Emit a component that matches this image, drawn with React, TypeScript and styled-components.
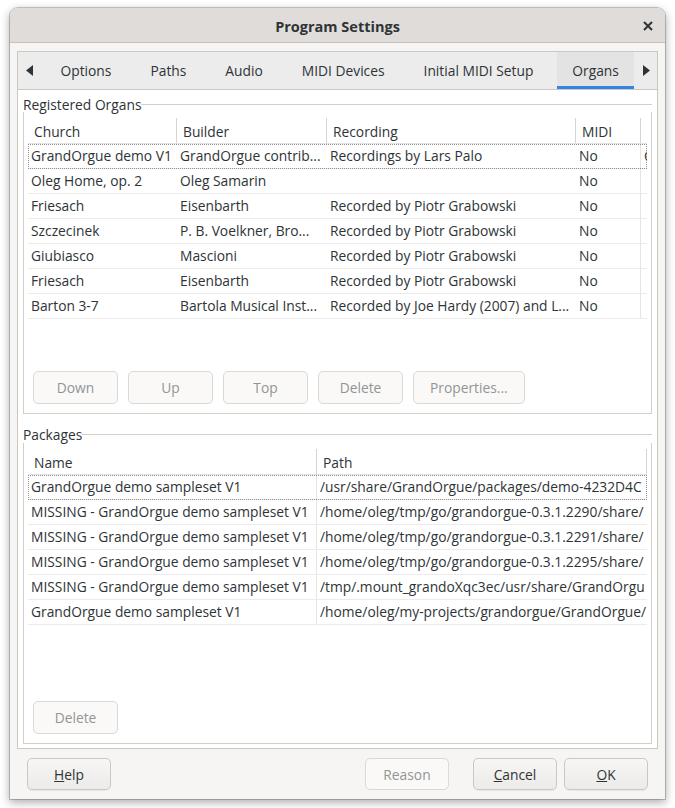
import React from 'react';
import styled, { createGlobalStyle } from 'styled-components';

const GlobalStyle = createGlobalStyle`
  html, body {
    margin: 0;
    background: #ffffff;
  }
  body {
    font-family: "Open Sans", "Noto Sans", sans-serif;
    font-size: 13.8px;
    color: #2e3436;
  }
`;

const Stage = styled.div`
  padding: 8px 10px 9px 10px;
`;

const Window = styled.div`
  width: 655px;
  height: 791px;
  display: flex;
  flex-direction: column;
  background: #f6f5f4;
  border-radius: 8px 8px 0 0;
  overflow: hidden;
  box-shadow: 0 0 0 1px rgba(0, 0, 0, 0.2), 0 3px 9px 1px rgba(0, 0, 0, 0.3);
`;

const TitleBar = styled.div`
  flex: none;
  height: 35px;
  box-sizing: border-box;
  padding-top: 2px;
  display: grid;
  grid-template-columns: 1fr auto 1fr;
  align-items: center;
  background: #dfdcd9;
  border-bottom: 1px solid #c6c2be;
`;

const Title = styled.div`
  grid-column: 2;
  font-weight: bold;
  font-size: 14.5px;
`;

const CloseButton = styled.div`
  grid-column: 3;
  justify-self: end;
  margin-right: 12px;
  display: flex;
`;

const Body = styled.div`
  flex: 1;
  display: flex;
  flex-direction: column;
  padding: 8px 7px 0 7px;
`;

const Notebook = styled.div`
  height: 698px;
  box-sizing: border-box;
  display: flex;
  flex-direction: column;
  border: 1px solid #cdc7c2;
`;

const TabStrip = styled.div`
  flex: none;
  height: 37px;
  display: flex;
  align-items: stretch;
  background: #ececec;
  border-bottom: 1px solid #cdc7c2;
`;

const TabArrow = styled.div<{ $end?: boolean }>`
  width: 23px;
  flex: ${p => (p.$end ? '1' : 'none')};
  display: flex;
  align-items: center;
  justify-content: ${p => (p.$end ? 'flex-start' : 'center')};
  padding-left: ${p => (p.$end ? '5px' : '0')};
`;

const Tab = styled.div<{ $active?: boolean }>`
  margin: 0 4px;
  padding: 0 15.5px 1px 15.5px;
  display: flex;
  align-items: center;
  white-space: nowrap;
  background: ${p => (p.$active ? '#e3e3e3' : 'transparent')};
  box-shadow: ${p => (p.$active ? 'inset 0 -3px 0 #3584e4' : 'none')};
`;

const Page = styled.div`
  flex: 1;
  min-height: 0;
  display: flex;
  flex-direction: column;
  gap: 13px;
  padding: 6px 5px 4px 5px;
  background: #ffffff;
`;

const Group = styled.div`
  flex: 1;
  min-height: 0;
  display: flex;
  flex-direction: column;
`;

const GroupHead = styled.div`
  flex: none;
  height: 16px;
  display: flex;
  align-items: center;
`;

const GroupLabel = styled.span`
  line-height: 16px;
  padding-top: 1px;
  white-space: nowrap;
`;

const GroupRule = styled.div`
  flex: 1;
  height: 1px;
  background: #d3cfcb;
`;

const GroupBox = styled.div`
  flex: 1;
  min-height: 0;
  display: flex;
  flex-direction: column;
  gap: 5px;
  padding: 6px 4px 9px 4px;
  border: 1px solid #d3cfcb;
  border-top: none;
`;

const List = styled.div`
  flex: 1;
  min-height: 0;
  overflow: hidden;
  background: #ffffff;
`;

const HeaderRow = styled.div<{ $cols: string }>`
  display: grid;
  grid-template-columns: ${p => p.$cols};
  height: 26px;
  box-sizing: border-box;
  border-bottom: 1px solid #e2e2e2;
`;

const HeaderCell = styled.div`
  padding: 1px 6px 0 6px;
  line-height: 25px;
  white-space: nowrap;
  overflow: hidden;
  border-right: 1px solid #d8d4d0;
`;

const Row = styled.div<{ $cols: string; $focus?: boolean }>`
  display: grid;
  grid-template-columns: ${p => p.$cols};
  height: 25px;
  box-sizing: border-box;
  border-bottom: 1px solid #ebebeb;
  outline: ${p => (p.$focus ? '1px dotted #8f8f8f' : 'none')};
  outline-offset: -1px;
`;

const Cell = styled.div<{ $rule?: boolean }>`
  padding: 0 3px;
  line-height: 24px;
  white-space: nowrap;
  overflow: hidden;
  border-right: ${p => (p.$rule ? '1px solid #e4e4e4' : 'none')};
`;

const ButtonRow = styled.div`
  flex: none;
  display: flex;
  gap: 10px;
  padding-left: 5px;
`;

const Button = styled.button<{ $short?: boolean }>`
  height: ${p => (p.$short ? '32px' : '33px')};
  min-width: ${p => (p.$short ? '84px' : '85px')};
  box-sizing: border-box;
  padding: 0 16px;
  font: inherit;
  color: #2e3436;
  border: 1px solid #cdc7c2;
  border-radius: 5px;
  background: linear-gradient(#f7f6f5, #edebe9);
  box-shadow: 0 1px 0 rgba(0, 0, 0, 0.05);
  &:disabled {
    color: #929595;
    background: #faf9f8;
    border-color: #dcd8d4;
    box-shadow: none;
  }
`;

const Footer = styled.div`
  flex: none;
  display: flex;
  align-items: center;
  padding: 9px 10px 0 10px;
`;

const FooterEnd = styled.div`
  margin-left: auto;
  display: flex;
  gap: 24px;
`;

const FooterPair = styled.div`
  display: flex;
  gap: 7px;
`;

const U = styled.span`
  text-decoration: underline;
`;

const Arrow: React.FC<{ right?: boolean }> = ({ right }) => (
  <svg width="7" height="11" viewBox="0 0 7 11">
    <polygon points={right ? '0,0 7,5.5 0,11' : '7,0 0,5.5 7,11'} fill="#2e3436" />
  </svg>
);

const organCols = '149px 150px 249px 65px 1fr';
const packageCols = '289px 1fr';

const organs = [
  ['GrandOrgue demo V1', 'GrandOrgue contrib...', 'Recordings by Lars Palo', 'No', 'C'],
  ['Oleg Home, op. 2', 'Oleg Samarin', '', 'No', ''],
  ['Friesach', 'Eisenbarth', 'Recorded by Piotr Grabowski', 'No', ''],
  ['Szczecinek', 'P. B. Voelkner, Bro...', 'Recorded by Piotr Grabowski', 'No', ''],
  ['Giubiasco', 'Mascioni', 'Recorded by Piotr Grabowski', 'No', ''],
  ['Friesach', 'Eisenbarth', 'Recorded by Piotr Grabowski', 'No', ''],
  ['Barton 3-7', 'Bartola Musical Inst...', 'Recorded by Joe Hardy (2007) and L...', 'No', ''],
];

const packages = [
  ['GrandOrgue demo sampleset V1', '/usr/share/GrandOrgue/packages/demo-4232D4C'],
  ['MISSING - GrandOrgue demo sampleset V1', '/home/oleg/tmp/go/grandorgue-0.3.1.2290/share/'],
  ['MISSING - GrandOrgue demo sampleset V1', '/home/oleg/tmp/go/grandorgue-0.3.1.2291/share/'],
  ['MISSING - GrandOrgue demo sampleset V1', '/home/oleg/tmp/go/grandorgue-0.3.1.2295/share/'],
  ['MISSING - GrandOrgue demo sampleset V1', '/tmp/.mount_grandoXqc3ec/usr/share/GrandOrgu'],
  ['GrandOrgue demo sampleset V1', '/home/oleg/my-projects/grandorgue/GrandOrgue/'],
];

const tabs = ['Options', 'Paths', 'Audio', 'MIDI Devices', 'Initial MIDI Setup', 'Organs'];

const App: React.FC = () => (
  <>
    <GlobalStyle />
    <Stage>
      <Window>
        <TitleBar>
          <Title>Program Settings</Title>
          <CloseButton>
            <svg width="10" height="10" viewBox="0 0 10 10">
              <path d="M1 1 L9 9 M9 1 L1 9" stroke="#2e3436" strokeWidth="2" />
            </svg>
          </CloseButton>
        </TitleBar>
        <Body>
          <Notebook>
            <TabStrip>
              <TabArrow><Arrow /></TabArrow>
              {tabs.map(t => (
                <Tab key={t} $active={t === 'Organs'}>{t}</Tab>
              ))}
              <TabArrow $end><Arrow right /></TabArrow>
            </TabStrip>
            <Page>
              <Group>
                <GroupHead>
                  <GroupLabel>Registered Organs</GroupLabel>
                  <GroupRule />
                </GroupHead>
                <GroupBox>
                  <List>
                    <HeaderRow $cols={organCols}>
                      <HeaderCell>Church</HeaderCell>
                      <HeaderCell>Builder</HeaderCell>
                      <HeaderCell>Recording</HeaderCell>
                      <HeaderCell>MIDI</HeaderCell>
                      <HeaderCell />
                    </HeaderRow>
                    {organs.map((r, i) => (
                      <Row key={i} $cols={organCols} $focus={i === 0}>
                        <Cell>{r[0]}</Cell>
                        <Cell>{r[1]}</Cell>
                        <Cell>{r[2]}</Cell>
                        <Cell $rule>{r[3]}</Cell>
                        <Cell>{r[4]}</Cell>
                      </Row>
                    ))}
                  </List>
                  <ButtonRow>
                    <Button disabled>Down</Button>
                    <Button disabled>Up</Button>
                    <Button disabled>Top</Button>
                    <Button disabled>Delete</Button>
                    <Button disabled>Properties...</Button>
                  </ButtonRow>
                </GroupBox>
              </Group>
              <Group>
                <GroupHead>
                  <GroupLabel>Packages</GroupLabel>
                  <GroupRule />
                </GroupHead>
                <GroupBox>
                  <List>
                    <HeaderRow $cols={packageCols}>
                      <HeaderCell>Name</HeaderCell>
                      <HeaderCell>Path</HeaderCell>
                    </HeaderRow>
                    {packages.map((r, i) => (
                      <Row key={i} $cols={packageCols} $focus={i === 0}>
                        <Cell $rule>{r[0]}</Cell>
                        <Cell>{r[1]}</Cell>
                      </Row>
                    ))}
                  </List>
                  <ButtonRow>
                    <Button disabled>Delete</Button>
                  </ButtonRow>
                </GroupBox>
              </Group>
            </Page>
          </Notebook>
          <Footer>
            <Button $short><U>H</U>elp</Button>
            <FooterEnd>
              <Button $short disabled>Reason</Button>
              <FooterPair>
                <Button $short><U>C</U>ancel</Button>
                <Button $short><U>O</U>K</Button>
              </FooterPair>
            </FooterEnd>
          </Footer>
        </Body>
      </Window>
    </Stage>
  </>
);

export default App;
